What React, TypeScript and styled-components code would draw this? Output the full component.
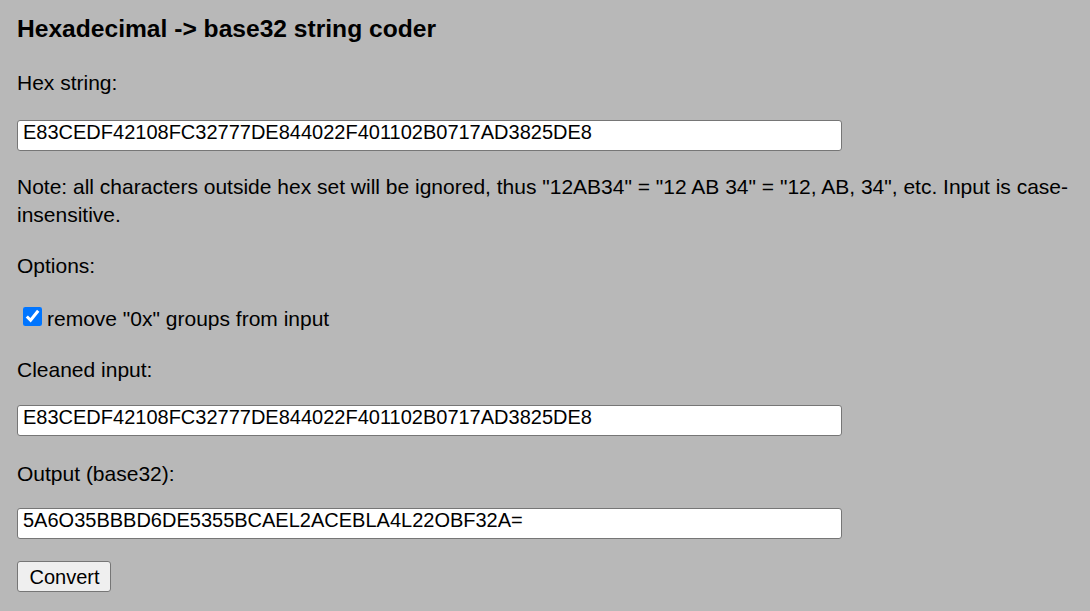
import React, { useState } from 'react';
import styled, { createGlobalStyle } from 'styled-components';

const GlobalStyle = createGlobalStyle`
  html, body {
    margin: 0;
    padding: 0;
    background: #b8b8b8;
  }
  body {
    font-family: 'Liberation Sans', Arial, sans-serif;
    font-size: 21px;
    color: #000;
  }
`;

const Page = styled.div`
  display: flex;
  flex-direction: column;
  align-items: flex-start;
  padding: 15px 17px 20px 17px;
  min-height: 100vh;
  box-sizing: border-box;
`;

const Title = styled.h3`
  font-size: 24.6px;
  font-weight: 700;
  line-height: 28px;
  margin: 0;
`;

const Text = styled.p<{ $top: number }>`
  margin: ${p => p.$top}px 0 0 0;
  line-height: 28px;
`;

const Field = styled.input<{ $top: number }>`
  margin: ${p => p.$top}px 0 0 0;
  width: 825px;
  height: 31px;
  box-sizing: border-box;
  padding: 0 5px 7px 5px;
  font-family: 'Liberation Sans', Arial, sans-serif;
  font-size: 20px;
  color: #000;
  background: #fff;
  border: 1px solid #767676;
  border-radius: 3px;
  outline: none;
`;

const OptionRow = styled.label`
  margin-top: 25px;
  display: flex;
  align-items: center;
  height: 28px;
  line-height: 28px;
  cursor: pointer;
`;

const Check = styled.input`
  width: 19px;
  height: 19px;
  margin: -5px 5px 0 6px;
  accent-color: #0075ff;
`;

const Button = styled.button`
  margin-top: 22px;
  width: 94px;
  height: 31px;
  padding: 0 0 0 1px;
  font-family: 'Liberation Sans', Arial, sans-serif;
  font-size: 20px;
  line-height: 30px;
  color: #000;
  background: #efefef;
  border: 1px solid #767676;
  border-radius: 3px;
  cursor: pointer;
`;

const HEX = 'E83CEDF42108FC32777DE844022F401102B0717AD3825DE8';

export default function App() {
  const [hex, setHex] = useState(HEX);
  const [stripOx, setStripOx] = useState(true);

  return (
    <>
      <GlobalStyle />
      <Page>
        <Title>Hexadecimal -&gt; base32 string coder</Title>
        <Text $top={26}>Hex string:</Text>
        <Field $top={23} value={hex} onChange={e => setHex(e.target.value)} />
        <Text $top={22}>
          Note: all characters outside hex set will be ignored, thus "12AB34" = "12 AB 34" = "12, AB, 34", etc. Input is
          case-insensitive.
        </Text>
        <Text $top={23}>Options:</Text>
        <OptionRow>
          <Check type="checkbox" checked={stripOx} onChange={e => setStripOx(e.target.checked)} />
          remove "0x" groups from input
        </OptionRow>
        <Text $top={23}>Cleaned input:</Text>
        <Field $top={21} value={HEX} readOnly />
        <Text $top={24}>Output (base32):</Text>
        <Field $top={20} value="5A6O35BBBD6DE5355BCAEL2ACEBLA4L22OBF32A=" readOnly />
        <Button type="button">Convert</Button>
      </Page>
    </>
  );
}
